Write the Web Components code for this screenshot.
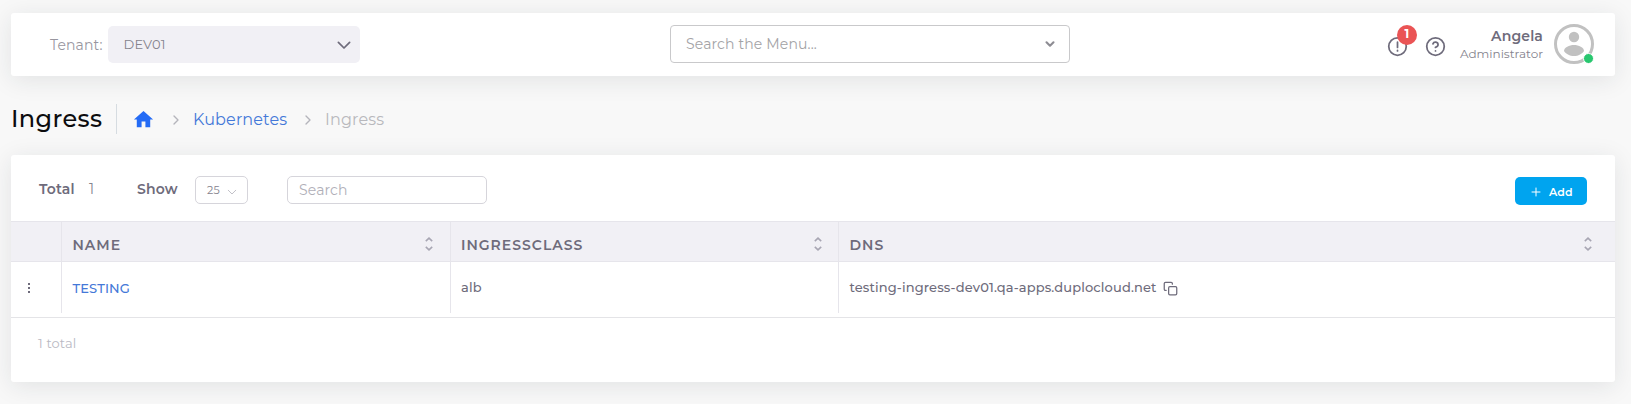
<!DOCTYPE html>
<html lang="en">
<head>
<meta charset="utf-8">
<title>Ingress</title>
<style>
html,body{margin:0;height:100%;background:#f8f8f8;overflow:hidden}
body{font-family:Montserrat,Inter,"Open Sans",sans-serif;font-size:14px;letter-spacing:.14px;color:#6e6b7b}
</style>
</head>
<body>
<ingress-page></ingress-page>
<script>
const define = (name, html, init) => customElements.define(name, class extends HTMLElement {
  connectedCallback() {
    if (this.shadowRoot) return;
    const t = document.createElement('template');
    t.innerHTML = html;
    this.attachShadow({mode: 'open'}).append(t.content.cloneNode(true));
    if (init) init(this);
  }
});

define('ui-text', `<style>:host{display:block;flex:none;line-height:20px;white-space:nowrap}</style><slot></slot>`, el => {
  const size = el.getAttribute('size'), weight = el.getAttribute('weight'), color = el.getAttribute('color');
  if (size) el.style.fontSize = size + 'px';
  if (weight) el.style.fontWeight = weight;
  if (color) el.style.color = color;
});

const paths = {
  down: '<path d="m6 9 6 6 6-6"/>',
  wide: '<path d="m4.500 8.500 7.500 7.500 7.500-7.500"/>',
  right: '<path d="m9 18 6-6-6-6"/>',
  alert: '<circle cx="12" cy="12" r="10"/><path d="M12 7v6M12 16.5v.6"/>',
  help: '<circle cx="12" cy="12" r="10"/><path d="M9.09 9a3 3 0 0 1 5.83 1c0 2-3 3-3 3M12 17h.01"/>',
  copy: '<rect x="9" y="9" width="13" height="13" rx="2"/><path d="M5 15H4a2 2 0 0 1-2-2V4a2 2 0 0 1 2-2h9a2 2 0 0 1 2 2v1"/>',
  plus: '<path d="M12 4v16M4 12h16"/>',
  home: '<path fill="currentColor" stroke="none" d="M10 20v-6h4v6h5v-8h3L12 3 2 12h3v8z"/>',
  more: '<g fill="currentColor" stroke="none"><rect x="10" y="2" width="4" height="4"/><rect x="10" y="10" width="4" height="4"/><rect x="10" y="18" width="4" height="4"/></g>',
};
define('ui-icon', `<style>:host{display:block;flex:none}svg{display:block;fill:none;stroke:currentColor;stroke-linecap:round;stroke-linejoin:round}</style><svg viewBox="0 0 24 24"></svg>`, el => {
  const svg = el.shadowRoot.querySelector('svg');
  const s = el.getAttribute('size');
  svg.setAttribute('width', s); svg.setAttribute('height', s);
  svg.setAttribute('stroke-width', el.getAttribute('stroke') || 2);
  svg.innerHTML = paths[el.getAttribute('name')];
});

define('sort-icon', `<style>:host{display:block;flex:none;color:#a8a6b3}svg{display:block}</style>
<svg width="8" height="14" viewBox="0 0 8 14" fill="none" stroke="currentColor" stroke-width="1.6"><path d="M.8 4.2 4 1.2l3.2 3M.8 9.8 4 12.8l3.2-3"/></svg>`);

define('user-avatar', `<style>:host{display:block;position:relative;width:40px;height:40px;flex:none}svg{display:block}i{position:absolute;right:0;bottom:0;width:9px;height:9px;border-radius:50%;background:#28c76f;border:1px solid #fff}</style>
<svg width="40" height="40" viewBox="0 0 40 40"><circle cx="20" cy="20" r="18.500" fill="#fff" stroke="#c1c1c1" stroke-width="3"/><circle cx="20" cy="13" r="5.200" fill="#c1c1c1"/><path fill="#c1c1c1" d="M10 27c0-3.400 5.300-5.900 10-5.900s10 2.500 10 5.900c-1.600 2.900-5.800 5-10 5s-8.400-2.100-10-5z"/></svg><i></i>`);

define('top-bar', `<style>
:host{display:flex;align-items:center;box-sizing:border-box;height:63px;background:#fff;border-radius:3px;box-shadow:0 4px 24px rgba(34,41,47,.1);padding:0 21px 0 39px}
.label{width:54px}
.tenant{display:flex;align-items:center;justify-content:space-between;box-sizing:border-box;width:252px;height:37px;flex:none;margin-left:4px;padding:0 7.500px 0 15.500px;border-radius:5px;background:#f1f0f5}
.menu{display:flex;align-items:center;justify-content:space-between;box-sizing:border-box;width:400px;height:38px;flex:none;margin:-1px 0 0 310px;padding:0 12px 0 15px;border:1px solid #c9c9cb;border-radius:4px}
.right{display:flex;align-items:center;height:40px;margin:-1px 0 0 auto}
.bell{position:relative;margin-top:5px}
.badge{position:absolute;left:10px;top:-11px;width:20px;height:20px;border-radius:50%;background:#ea5455;display:flex;justify-content:center}
.who{align-self:flex-start;width:82px;margin:3px 11px 0 15px;display:flex;flex-direction:column;align-items:flex-end}
</style>
<ui-text class="label" color="#98969f">Tenant:</ui-text>
<div class="tenant"><ui-text size="13" color="#85838d" style="margin-top:-2px">DEV01</ui-text><ui-icon name="wide" size="18" stroke="2.300"></ui-icon></div>
<div class="menu"><ui-text color="#a3a3a6">Search the Menu...</ui-text><ui-icon name="down" size="14" stroke="3.600" style="color:#8d8c93"></ui-icon></div>
<div class="right">
<div class="bell"><ui-icon name="alert" size="21"></ui-icon><div class="badge"><ui-text size="12" weight="700" color="#fff" style="margin-top:-1px">1</ui-text></div></div>
<ui-icon name="help" size="21" style="margin:5px 0 0 17px"></ui-icon>
<div class="who"><ui-text weight="600" style="line-height:18px">Angela</ui-text><ui-text size="12" color="#85838d" style="line-height:18px;letter-spacing:0">Administrator</ui-text></div>
<user-avatar></user-avatar></div>`);

define('bread-crumbs', `<style>
:host{display:flex;align-items:center;height:30px}
.rule{width:1px;height:30px;background:#d6dce1;margin-right:15px}
.title{width:105px;line-height:30px;letter-spacing:.4px}
ui-icon.sep{color:#b4b4bb}
</style>
<ui-text class="title" size="24" weight="500" color="#0c0c0e">Ingress</ui-text><div class="rule"></div>
<ui-icon name="home" size="23" style="color:#246bf5;margin-left:-.5px"></ui-icon>
<ui-icon class="sep" name="right" size="16" style="margin:1px 0 0 13.500px"></ui-icon>
<ui-text size="16" color="#4478d8" style="width:95px;margin:1px 0 0 9px">Kubernetes</ui-text>
<ui-icon class="sep" name="right" size="16" style="margin:1px 0 0 12px"></ui-icon>
<ui-text size="16" color="#b8b8bd" style="margin:1px 0 0 9px">Ingress</ui-text>`);

define('list-toolbar', `<style>
:host{display:flex;align-items:flex-start;box-sizing:border-box;height:66px;padding:21px 28px 0 28px}
.box{display:flex;align-items:center;box-sizing:border-box;height:28px;flex:none;border:1px solid #d6d5db;border-radius:5px}
button{all:unset;box-sizing:border-box;display:flex;align-items:center;width:72px;height:28px;margin:1px 0 0 auto;padding:1px 0 0 15px;border-radius:5px;background:#00a4ef;color:#fff}
</style>
<ui-text weight="600" style="width:50px;margin-top:3px">Total</ui-text>
<ui-text style="width:48px;margin-top:3px" color="#85838d">1</ui-text>
<ui-text weight="600" style="width:58px;margin-top:3px">Show</ui-text>
<div class="box" style="width:53px;padding-left:11px"><ui-text size="11" style="width:15px" color="#85838d">25</ui-text><ui-icon name="wide" size="12" stroke="2" style="color:#c2c1c8;margin:3px 0 0 4px"></ui-icon></div>
<div class="box" style="width:200px;margin-left:39px;padding-left:11px"><ui-text color="#b0afb8">Search</ui-text></div>
<button><ui-icon name="plus" size="12" stroke="2"></ui-icon><ui-text size="11" weight="600" style="margin-left:7px">Add</ui-text></button>`);

define('data-table', `<style>
:host{display:block}
.row{display:grid;grid-template-columns:51px 389px 388px 1fr}
.row>div{display:flex;box-sizing:border-box;padding-left:10px;border-right:1px solid #e6e5eb}
.row>div:last-child{border-right:0}
.head{height:41px;box-sizing:border-box;background:#f1f0f5;border:solid #e6e5eb;border-width:1px 0}
.head>div{justify-content:space-between;padding-right:17px}
.head>div:nth-child(3){padding-right:16px}
.head>div:last-child{padding-right:23.500px}
.head ui-text{margin-top:13px;letter-spacing:1px}
.head sort-icon{margin-top:15px}
.body{height:56px;box-sizing:border-box;border-bottom:1px solid #e4e4e7}
.body>div{height:51px;padding-top:15px}
.body ui-text{letter-spacing:.13px}
</style>
<div class="row head"><div></div>
<div><ui-text weight="600" style="margin-left:.5px">NAME</ui-text><sort-icon></sort-icon></div>
<div><ui-text weight="600">INGRESSCLASS</ui-text><sort-icon></sort-icon></div>
<div><ui-text weight="600" style="margin-left:.5px">DNS</ui-text><sort-icon></sort-icon></div></div>
<div class="row body"><div><ui-icon name="more" size="12" style="margin:5px 0 0 2px"></ui-icon></div>
<div><ui-text size="13" weight="500" color="#4478d8" style="margin:1px 0 0 .5px">TESTING</ui-text></div>
<div><ui-text size="13" weight="500">alb</ui-text></div>
<div><ui-text size="13" weight="500" style="margin-left:.5px;width:308px">testing-ingress-dev01.qa-apps.duplocloud.net</ui-text><ui-icon name="copy" size="15" style="margin:4px 0 0 5px"></ui-icon></div></div>`);

define('list-card', `<style>:host{display:block;box-sizing:border-box;height:227px;background:#fff;border-radius:3px;box-shadow:0 4px 24px rgba(34,41,47,.1)}
footer{padding:15px 0 0 27px}</style>
<list-toolbar></list-toolbar><data-table></data-table>
<footer><ui-text size="13" color="#b9b9c3">1 total</ui-text></footer>`);

define('ingress-page', `<style>:host{display:block;padding:13px 16px 0 11px}bread-crumbs{margin:28px 0 21px}</style>
<top-bar></top-bar><bread-crumbs></bread-crumbs><list-card></list-card>`);
</script>
</body>
</html>
